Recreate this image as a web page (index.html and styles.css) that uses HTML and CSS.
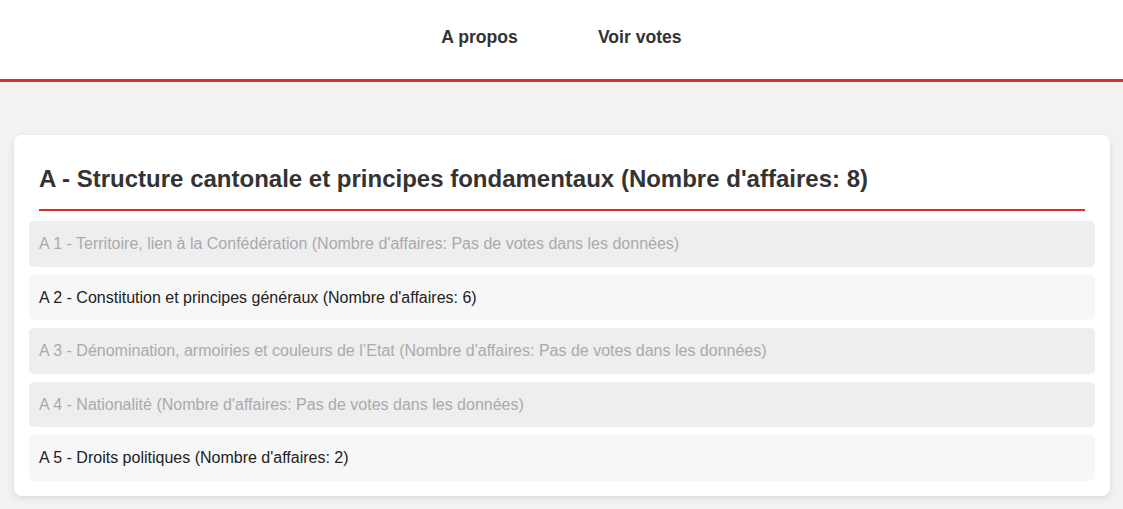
FILE: index.html
```html
<!DOCTYPE html>
<html lang="fr">
<head>
<meta charset="utf-8">
<title>Votes</title>
<link rel="stylesheet" href="styles.css">
</head>
<body>
<header class="site-header">
  <nav class="nav">
    <a class="nav-link" href="#">A propos</a>
    <a class="nav-link" href="#">Voir votes</a>
  </nav>
</header>
<main class="main">
  <section class="card">
    <h2 class="card-title">A - Structure cantonale et principes fondamentaux (Nombre d'affaires: 8)</h2>
    <ul class="items">
      <li class="item item-disabled">A 1 - Territoire, lien à la Confédération (Nombre d'affaires: Pas de votes dans les données)</li>
      <li class="item">A 2 - Constitution et principes généraux (Nombre d'affaires: 6)</li>
      <li class="item item-disabled">A 3 - Dénomination, armoiries et couleurs de l’Etat (Nombre d'affaires: Pas de votes dans les données)</li>
      <li class="item item-disabled">A 4 - Nationalité (Nombre d'affaires: Pas de votes dans les données)</li>
      <li class="item">A 5 - Droits politiques (Nombre d'affaires: 2)</li>
    </ul>
  </section>
</main>
</body>
</html>
```
FILE: styles.css
```css
* { box-sizing: border-box; }
html, body {
  margin: 0;
  padding: 0;
}
body {
  background: #f2f2f2;
  font-family: "Liberation Sans", Arial, sans-serif;
  color: #222;
}
.site-header {
  background: #fff;
  height: 82px;
  border-bottom: 3px solid #d9302f;
}
.nav {
  display: flex;
  justify-content: center;
  gap: 80px;
  padding-top: 27px;
}
.nav-link {
  font-size: 17.6px;
  font-weight: 700;
  color: #333;
  text-decoration: none;
}
.main {
  padding: 53px 13px 20px 14px;
}
.card {
  background: #fff;
  border-radius: 8px;
  box-shadow: 0 2px 6px rgba(0, 0, 0, 0.1);
  padding: 15px;
}
.card-title {
  margin: 15px 10px 10px;
  padding-bottom: 16px;
  border-bottom: 2px solid #d9302f;
  font-size: 24px;
  font-weight: 700;
  color: #333;
}
.items {
  list-style: none;
  margin: 0;
  padding: 0;
  display: flex;
  flex-direction: column;
  gap: 8px;
}
.item {
  background: #f7f7f7;
  border-radius: 5px;
  padding: 10px;
  font-size: 16px;
  line-height: 1.6;
  color: #222;
}
.item-disabled {
  background: #eee;
  color: #aaa;
}
```
